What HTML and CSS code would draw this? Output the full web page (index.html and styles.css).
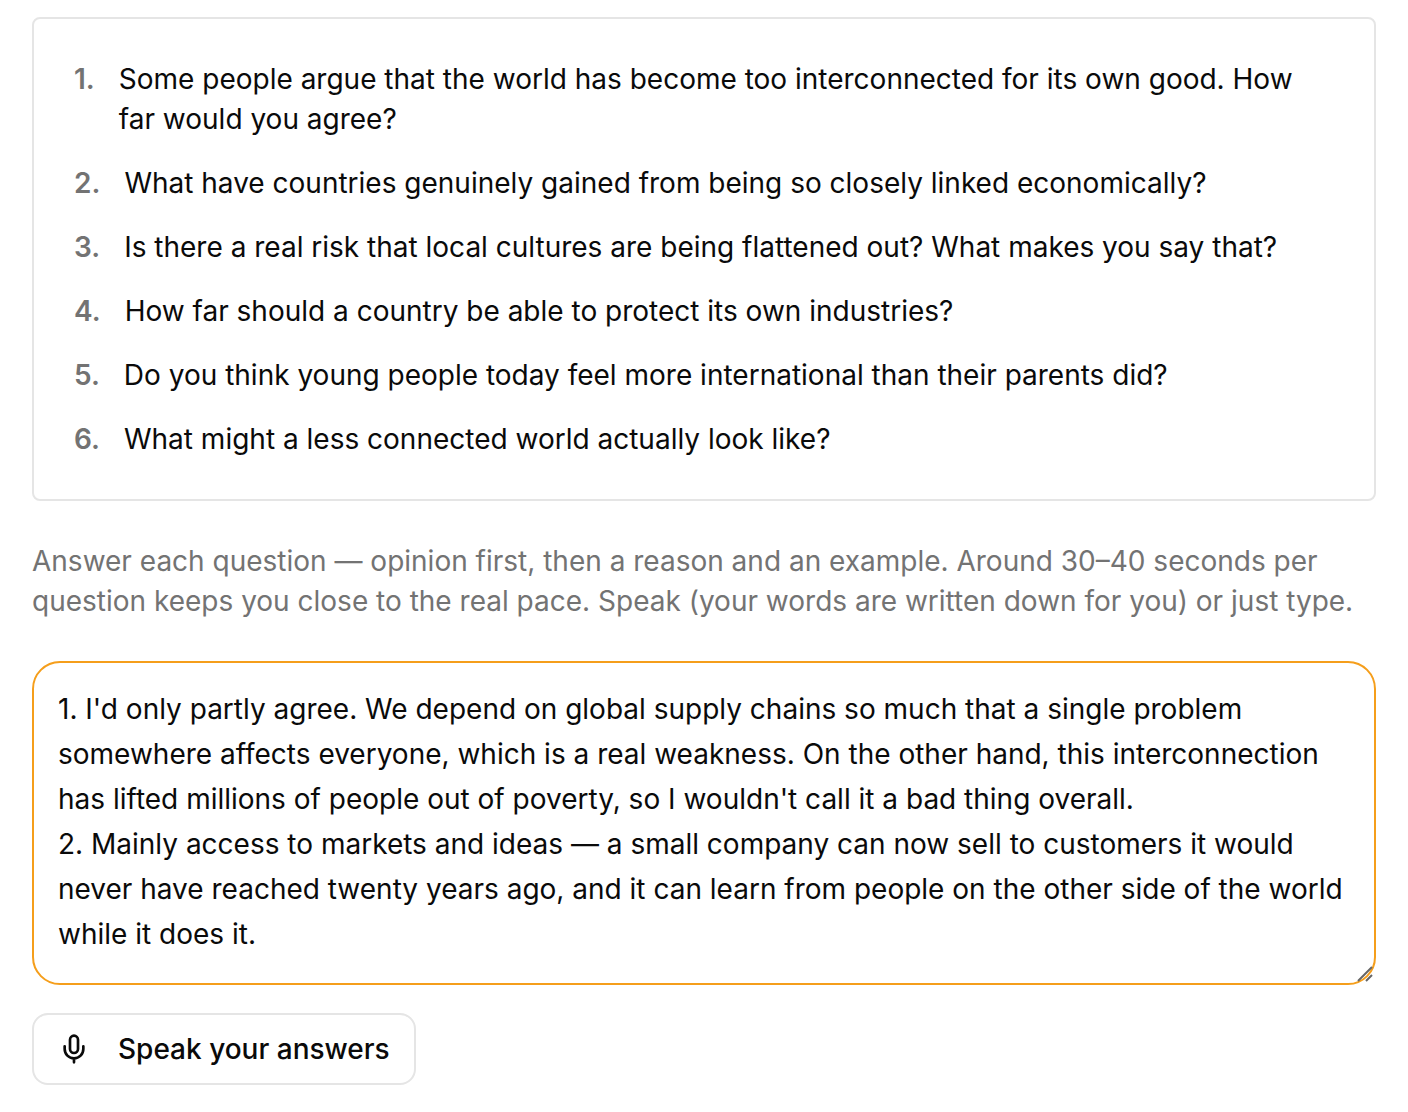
FILE: index.html
```html
<!DOCTYPE html>
<html lang="en">
<head>
<meta charset="utf-8">
<meta name="viewport" content="width=device-width, initial-scale=1">
<title>Speaking practice</title>
<link rel="stylesheet" href="styles.css">
</head>
<body>
<main class="practice">
  <section class="card">
    <ol class="questions">
      <li class="question"><span class="number">1.</span><span>Some people argue that the world has become too interconnected for its own good. How far would you agree?</span></li>
      <li class="question"><span class="number">2.</span><span>What have countries genuinely gained from being so closely linked economically?</span></li>
      <li class="question"><span class="number">3.</span><span>Is there a real risk that local cultures are being flattened out? What makes you say that?</span></li>
      <li class="question"><span class="number">4.</span><span>How far should a country be able to protect its own industries?</span></li>
      <li class="question"><span class="number">5.</span><span>Do you think young people today feel more international than their parents did?</span></li>
      <li class="question"><span class="number">6.</span><span>What might a less connected world actually look like?</span></li>
    </ol>
  </section>
  <label class="hint" for="answer">Answer each question — opinion first, then a reason and an example. Around 30–40 seconds per question keeps you close to the real pace. Speak (your words are written down for you) or just type.</label>
  <div class="answer-box">
    <textarea class="answer" id="answer" spellcheck="false">1. I'd only partly agree. We depend on global supply chains so much that a single problem somewhere affects everyone, which is a real weakness. On the other hand, this interconnection has lifted millions of people out of poverty, so I wouldn't call it a bad thing overall.
2. Mainly access to markets and ideas — a small company can now sell to customers it would never have reached twenty years ago, and it can learn from people on the other side of the world while it does it.</textarea>
    <svg class="grip" viewBox="0 0 18 18" aria-hidden="true"><path d="M2 16 16 2M10 16l6-6"/></svg>
  </div>
  <button class="speak" type="button">
    <svg class="mic" viewBox="0 0 24 24" aria-hidden="true"><path d="M12 19v3M19 10v2a7 7 0 0 1-14 0v-2"/><rect x="9" y="2" width="6" height="13" rx="3"/></svg>
    <span>Speak your answers</span>
  </button>
</main>
</body>
</html>
```
FILE: styles.css
```css
* {
  box-sizing: border-box;
}

body {
  margin: 0;
  background: #fff;
  color: #0a0a0a;
  font-family: Inter, "Liberation Sans", sans-serif;
  font-size: 28px;
  line-height: 40px;
}

.practice {
  display: flex;
  flex-direction: column;
  align-items: stretch;
  padding: 17px 32px 27px;
}

.card {
  padding: 40px;
  border: 2px solid #e5e5e5;
  border-radius: 8px;
}

.questions {
  display: flex;
  flex-direction: column;
  gap: 24px;
  margin: 0;
  padding: 0;
  list-style: none;
}

.question {
  display: flex;
  gap: 24px;
}

.number {
  color: #737373;
  font-weight: 600;
}

.hint {
  margin-top: 40px;
  color: #737373;
}

.answer-box {
  position: relative;
  display: flex;
  margin-top: 40px;
}

.answer {
  flex: 1;
  min-width: 0;
  height: 324px;
  padding: 24px;
  border: 2px solid #f59e1b;
  border-radius: 28px;
  outline: none;
  background: #fff;
  color: inherit;
  font: inherit;
  line-height: 45px;
  resize: none;
  overflow: hidden;
}

.grip {
  position: absolute;
  right: 2px;
  bottom: 2px;
  width: 18px;
  height: 18px;
  fill: none;
  stroke: #666;
  stroke-width: 2;
}

.speak {
  display: flex;
  align-self: flex-start;
  align-items: center;
  gap: 28px;
  margin-top: 28px;
  padding: 14px 24px;
  border: 2px solid #e5e5e5;
  border-radius: 16px;
  background: #fff;
  color: inherit;
  font: inherit;
  font-weight: 500;
}

.mic {
  width: 32px;
  height: 32px;
  fill: none;
  stroke: currentColor;
  stroke-width: 2;
  stroke-linecap: round;
  stroke-linejoin: round;
}
```
